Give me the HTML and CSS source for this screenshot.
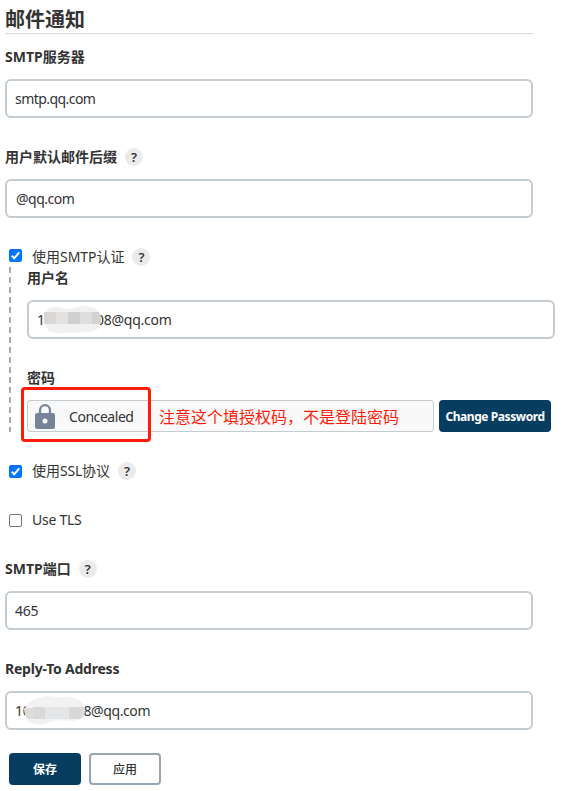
FILE: index.html
```
<!DOCTYPE html>
<html lang="zh-CN">
<head>
<meta charset="utf-8">
<title>邮件通知</title>
<link rel="stylesheet" href="styles.css">
</head>
<body>
<main class="page">
  <h1 class="title">邮件通知</h1>
  <div class="row row-label"><b class="label"><span class="smtp">SMTP</span>服务器</b></div>
  <div class="field"><span class="smtp-host">smtp.qq.com</span></div>
  <div class="row row-label gap"><b class="label">用户默认邮件后缀</b><span class="help">?</span></div>
  <div class="field"><span class="suffix">@qq.com</span></div>
  <div class="row check-row auth"><span class="box on"><svg viewBox="0 0 13 13"><path d="M2.7 6.7 5.2 9.2 10.3 3.3"/></svg></span><span class="check-label">使用<span class="smtp-reg">SMTP</span>认证</span><span class="help">?</span></div>
  <section class="nested">
    <svg class="guide" viewBox="0 0 2 165"><path d="M1 0V165"/></svg>
    <div class="row user-label"><b class="label">用户名</b></div>
    <div class="field"><span>1</span>
      <svg class="mosaic user-mosaic" viewBox="0 0 58 28"><path fill="#f1f1f1" d="M1 13C1 5 6 1 12 1C18 1 20 3 24 3C32 3 35 0 42 0C51 0 58 5 58 14C58 22 52 26 45 26C39 26 35 27 29 27C23 26 20 28 13 27C6 27 1 21 1 13Z"/><path fill="#d9d7d6" d="M1 6H13V18H1Z"/><path fill="#e3e2e1" d="M13 6H25V18H13Z"/><path fill="#cfd0d0" d="M25 6H37V18H25Z"/><path fill="#dedede" d="M37 6H49V18H37Z"/><path fill="#d5d1d0" d="M49 6H56Q58 9 58 18H49Z"/></svg>
      <span class="mail-user">08@qq.com</span></div>
    <div class="row password-label"><b class="label">密码</b></div>
    <div class="password">
      <div class="concealed">
        <svg class="lock" viewBox="0 0 20 26"><path fill="none" stroke="#758499" stroke-width="2.3" d="M5 10V6.5a5 5.3 0 0 1 10 0V10"/><path fill="#758499" fill-rule="evenodd" d="M2.5 9h15Q20 9 20 11.5v11Q20 25 17.5 25h-15Q0 25 0 22.5v-11Q0 9 2.5 9Zm7.5 5.5a2.5 2.5 0 1 0 0 5 2.5 2.5 0 0 0 0-5Z"/></svg>
        <span class="concealed-text">Concealed</span>
        <span class="note">注意这个填授权码，不是登陆密码</span>
        <i class="highlight"></i>
      </div>
      <button class="btn primary change"><span class="change-text">Change Password</span></button>
    </div>
  </section>
  <div class="row check-row ssl"><span class="box on"><svg viewBox="0 0 13 13"><path d="M2.7 6.7 5.2 9.2 10.3 3.3"/></svg></span><span class="check-label">使用<span class="ssl-reg">SSL</span>协议</span><span class="help">?</span></div>
  <div class="row check-row tls"><span class="box"></span><span class="check-label use-tls">Use TLS</span></div>
  <div class="row port-label"><b class="label"><span class="smtp">SMTP</span>端口</b><span class="help">?</span></div>
  <div class="field"><span class="port">465</span></div>
  <div class="row row-label gap"><b class="label reply">Reply-To Address</b></div>
  <div class="field"><span class="ten">10</span>
    <svg class="mosaic reply-mosaic" viewBox="0 0 61 29"><path fill="#f2f2f2" d="M1 14C1 7 12 1 24 0C31 0 34 2 40 1C52 0 60 5 61 13C61 22 55 25 48 25C37 24 30 24 23 27C12 31 1 26 1 21Z"/><path fill="#dedddd" d="M0 12H9V23H4Q0 19 0 12Z"/><path fill="#d9d9da" d="M9 11H21V23H9Z"/><path fill="#e4e5e6" d="M21 11H45V23H21Z"/><path fill="#d8d8d8" d="M45 11H57V23H45Z"/><path fill="#dddbda" d="M57 11H61Q61 20 57 23Z"/></svg>
    <span class="mail-reply">8@qq.com</span></div>
  <footer class="actions"><button class="btn primary save">保存</button><button class="btn apply">应用</button></footer>
</main>
</body>
</html>
```
FILE: styles.css
```
* { box-sizing: border-box; }
body { margin: 0; background: #fff; color: #333; font: 14px/20px "Noto Sans", "Noto Sans CJK SC", sans-serif; }
.page { width: 561px; height: 791px; padding: 5px 28px 0 5px; overflow: hidden; }
.title { margin: 0; height: 29px; border-bottom: 1px solid #dcdcdc; font-size: 20px; line-height: 30px; font-weight: 700; }
.row { display: flex; align-items: center; height: 20px; white-space: nowrap; }
.row-label { margin: 13px 0 12px; }
.row-label.gap { margin-top: 29px; }
.label { font-weight: 700; }
.help { display: flex; align-items: center; justify-content: center; width: 18px; height: 18px; margin-left: 8px; border-radius: 50%; background: #ebebeb; font-size: 13px; line-height: 18px; font-weight: 600; }
.field { display: flex; align-items: center; width: 528px; height: 39px; padding: 1px 8px 0; border: 2px solid #c3ccd1; border-radius: 6px; background: #fff; white-space: nowrap; }
.smtp-host { letter-spacing: -0.55px; }
.suffix { padding-left: 1px; letter-spacing: -0.5px; }
.mail-user { letter-spacing: -0.25px; }
.mail-reply { letter-spacing: -0.4px; }
.port, .ten { letter-spacing: -0.3px; }
.reply { letter-spacing: -0.22px; }
.use-tls { letter-spacing: -0.25px; }
.smtp-reg { letter-spacing: -0.05px; }
.ssl-reg { letter-spacing: -0.2px; }
.check-row { padding-left: 4px; }
.box { display: flex; width: 13px; height: 13px; margin: 1px 10px 0 0; border: 1px solid #767676; border-radius: 2px; background: #fff; }
.box.on { border: 0; background: #0075ff; }
.box svg { width: 13px; height: 13px; fill: none; stroke: #fff; stroke-width: 2; }
.auth { margin-top: 29px; }
.auth .box { margin-top: -3px; }
.nested { position: relative; height: 165px; padding-left: 22px; }
.guide { position: absolute; left: 4px; top: -1px; width: 2px; height: 165px; fill: none; stroke: #aaa; stroke-width: 2; stroke-dasharray: 6 4; }
.user-label { margin: 1px 0 12px; }
.password-label { margin: 29px 0 12px; }
.mosaic { position: relative; flex: none; }
.user-mosaic { width: 58px; height: 28px; margin: 0 -5px 0 -2px; }
.reply-mosaic { width: 61px; height: 29px; margin: -2px -2px 0 -6px; }
.password { display: flex; gap: 5px; width: 524px; height: 32px; }
.concealed { position: relative; display: flex; align-items: center; width: 407px; height: 32px; padding-left: 7px; border: 1px solid #c3ccd1; border-radius: 3px; background: #f9f9f9; white-space: nowrap; }
.lock { width: 20px; height: 26px; margin: 1px 14px 0 0; }
.concealed-text { width: 65px; padding-top: 2px; letter-spacing: -0.45px; }
.note { margin-left: 25px; padding-top: 2px; color: #ff1b0b; font-size: 16px; line-height: 24px; }
.highlight { position: absolute; left: -7px; top: -14px; width: 130px; height: 55px; border: 3px solid #ff1b0b; border-radius: 4px; }
.btn { display: flex; align-items: center; justify-content: center; height: 32px; padding: 0; border: 2px solid #97a5b1; border-radius: 4px; background: #fff; color: #333; font: 600 12px/20px "Noto Sans", "Noto Sans CJK SC", sans-serif; white-space: nowrap; }
.btn.primary { border-color: #063d60; background: #063d60; color: #fff; font-weight: 700; }
.apply { font-weight: 500; }
.btn.save, .btn.apply { padding-top: 1px; }
.change { width: 112px; }
.change-text { padding-top: 2px; letter-spacing: -0.42px; }
.ssl { margin-top: 28px; }
.tls { margin-top: 29px; }
.port-label { margin: 29px 0 12px; }
.actions { display: flex; gap: 8px; margin: 23px 0 0 4px; }
.save, .apply { width: 72px; }
```
